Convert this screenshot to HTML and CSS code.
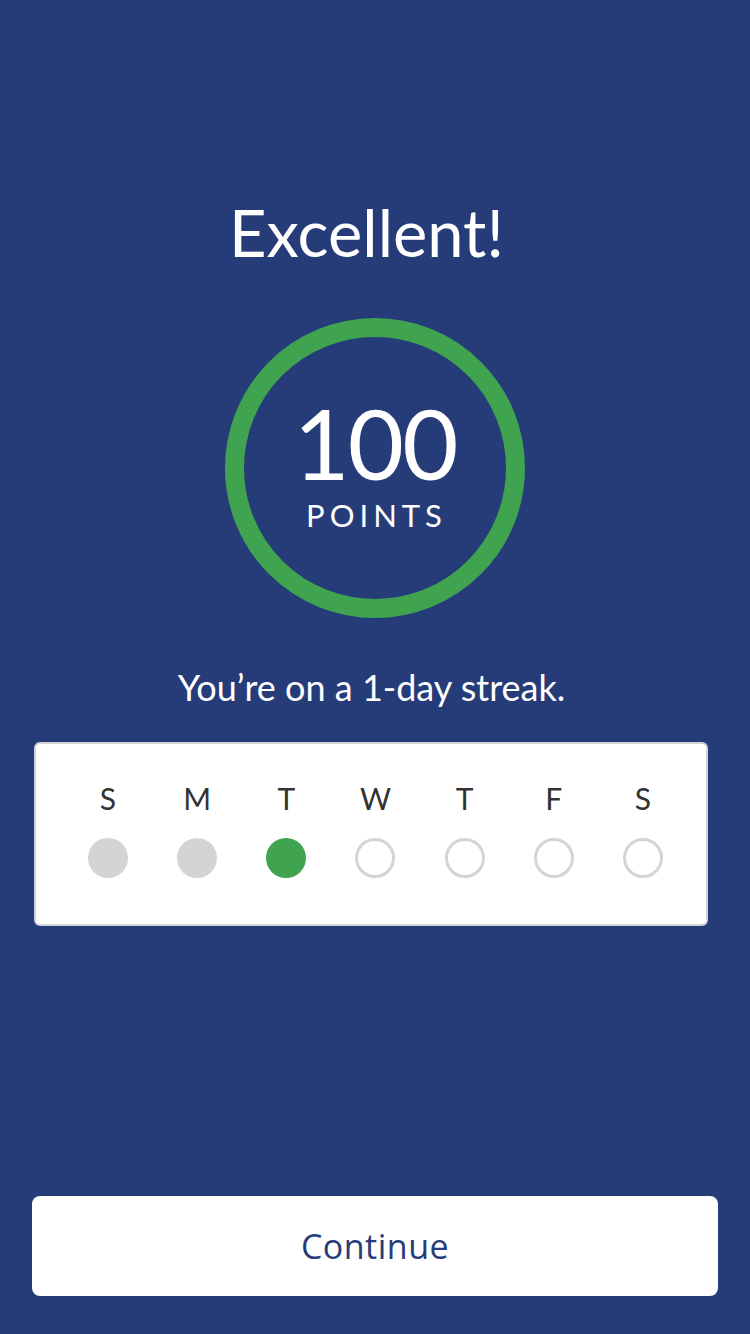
FILE: index.html
```html
<!DOCTYPE html>
<html lang="en">
<head>
<meta charset="utf-8">
<title>Excellent!</title>
<link rel="stylesheet" href="styles.css">
</head>
<body>
<main class="screen">
  <h1 class="title">Excellent!</h1>
  <div class="ring">
    <div class="score">100</div>
    <div class="score-label">POINTS</div>
  </div>
  <p class="streak">You’re on a 1-day streak.</p>
  <div class="week">
    <div class="day"><span class="day-letter">S</span><span class="dot dot-past"></span></div>
    <div class="day"><span class="day-letter">M</span><span class="dot dot-past"></span></div>
    <div class="day"><span class="day-letter">T</span><span class="dot dot-done"></span></div>
    <div class="day"><span class="day-letter">W</span><span class="dot dot-empty"></span></div>
    <div class="day"><span class="day-letter">T</span><span class="dot dot-empty"></span></div>
    <div class="day"><span class="day-letter">F</span><span class="dot dot-empty"></span></div>
    <div class="day"><span class="day-letter">S</span><span class="dot dot-empty"></span></div>
  </div>
  <button class="continue" type="button">Continue</button>
</main>
</body>
</html>
```

FILE: styles.css
```css
* {
  box-sizing: border-box;
}

html, body {
  margin: 0;
  padding: 0;
  background: #263c78;
}

.screen {
  display: flex;
  flex-direction: column;
  align-items: center;
  min-height: 1334px;
  padding: 200px 0 38px;
  font-family: Lato, "Open Sans", sans-serif;
  color: #ffffff;
}

.title {
  margin: 0 17px 0 0;
  font-size: 65px;
  line-height: 64px;
  font-weight: 400;
}

.ring {
  margin-top: 54px;
  width: 300px;
  height: 300px;
  border: 19px solid #3fa34f;
  border-radius: 50%;
  display: flex;
  flex-direction: column;
  align-items: center;
  padding-top: 57px;
}

.score {
  font-size: 97px;
  line-height: 97px;
  font-weight: 400;
  letter-spacing: -2px;
}

.score-label {
  margin-top: 9px;
  font-size: 31px;
  line-height: 31px;
  letter-spacing: 5px;
  padding-left: 3px;
}

.streak {
  margin: 51px 7px 0 0;
  font-size: 36px;
  line-height: 36px;
}

.week {
  margin: 37px 8px 0 0;
  width: 674px;
  height: 184px;
  background: #ffffff;
  border: 2px solid #d3d4d6;
  border-radius: 6px;
  display: flex;
  justify-content: space-between;
  padding: 39px 43px 0 52px;
}

.day {
  width: 40px;
  display: flex;
  flex-direction: column;
  align-items: center;
}

.day-letter {
  font-size: 30px;
  line-height: 30px;
  color: #333333;
}

.dot {
  margin-top: 25px;
  width: 40px;
  height: 40px;
  border-radius: 50%;
}

.dot-past {
  background: #d3d4d4;
}

.dot-done {
  background: #3fa34f;
}

.dot-empty {
  border: 3px solid #d3d4d4;
}

.continue {
  margin-top: auto;
  width: 686px;
  height: 100px;
  border: none;
  border-radius: 8px;
  background: #ffffff;
  color: #263c78;
  font-family: "Open Sans", sans-serif;
  font-size: 34px;
  letter-spacing: 0.5px;
  padding: 0;
}
```
